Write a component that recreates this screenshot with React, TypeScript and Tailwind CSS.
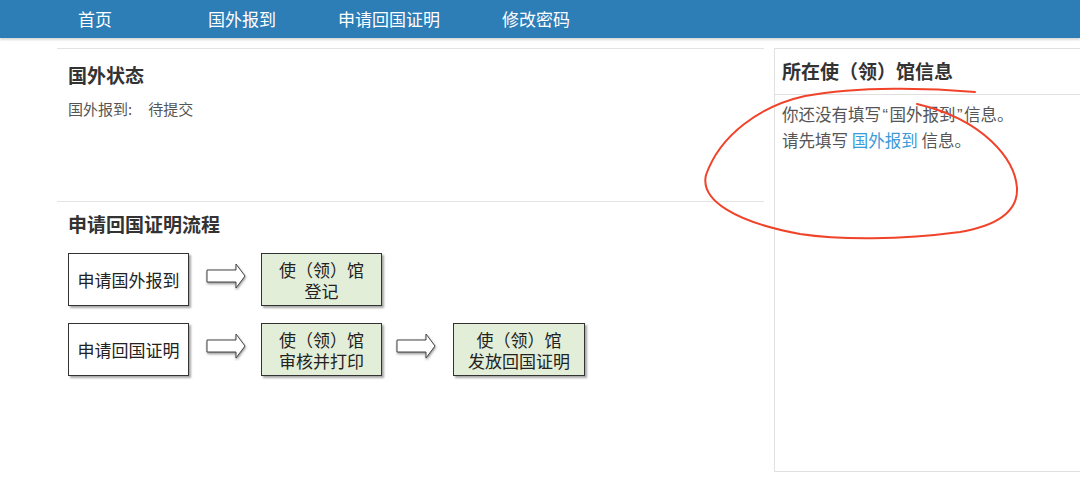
import React from "react";

const font = { fontFamily: '"Noto Sans CJK SC", "Noto Sans", sans-serif' };
const latin = { fontFamily: '"Liberation Sans", sans-serif' };

function Arrow() {
  return (
    <svg width="44" height="30" viewBox="0 0 44 30" className="mt-[8px] shrink-0">
      <defs>
        <filter id="sh" x="-20%" y="-20%" width="150%" height="150%">
          <feDropShadow dx="0.5" dy="1.5" stdDeviation="1" floodColor="#444" floodOpacity="0.6" />
        </filter>
      </defs>
      <path d="M2 9 H31 V3 L40 15 L31 27 V21 H2 Z" fill="#fff" stroke="#444" strokeWidth="1" filter="url(#sh)" />
    </svg>
  );
}

function Box({ children, green }: { children: React.ReactNode; green?: boolean }) {
  return (
    <div
      className={`flex h-[53px] flex-col items-center justify-center border border-[#333] text-[17px] leading-[21px] text-[#222] shadow-[2px_2px_2px_rgba(0,0,0,0.35)] ${
        green ? "bg-[#e2eed8]" : "bg-white"
      }`}
    >
      {children}
    </div>
  );
}

export default function App() {
  return (
    <div className="relative h-[480px] w-[1080px] overflow-hidden bg-white" style={font}>
      <nav className="flex h-[38px] items-center bg-[#2d7db7] text-[17px] text-white shadow-[0_2px_2px_rgba(0,0,0,0.15)]">
        <span className="ml-[78px]">首页</span>
        <span className="ml-[96px]">国外报到</span>
        <span className="ml-[62px]">申请回国证明</span>
        <span className="ml-[62px]">修改密码</span>
      </nav>
      <div className="mt-[10px] flex">
        <div className="ml-[57px] w-[707px] shrink-0">
          <section className="h-[153px] border-t border-[#e3e3e3] pl-[11px]">
            <h2 className="mt-[14px] text-[19px] font-bold leading-[24px] text-[#333]">国外状态</h2>
            <p className="mt-[12px] text-[15px] leading-[20px] text-[#555]">
              国外报到:<span className="ml-[16px]">待提交</span>
            </p>
          </section>
          <section className="border-t border-[#e3e3e3] pl-[11px]">
            <h2 className="mt-[10px] text-[19px] font-bold leading-[24px] text-[#333]">申请回国证明流程</h2>
            <div className="mt-[17px] flex items-start">
              <div className="w-[121px]">
                <Box>申请国外报到</Box>
              </div>
              <div className="ml-[16px] mr-[12px]">
                <Arrow />
              </div>
              <div className="w-[121px]">
                <Box green>
                  <span>使（领）馆</span>
                  <span>登记</span>
                </Box>
              </div>
            </div>
            <div className="mt-[17px] flex items-start">
              <div className="w-[121px]">
                <Box>申请回国证明</Box>
              </div>
              <div className="ml-[16px] mr-[12px]">
                <Arrow />
              </div>
              <div className="w-[121px]">
                <Box green>
                  <span>使（领）馆</span>
                  <span>审核并打印</span>
                </Box>
              </div>
              <div className="ml-[13px] mr-[14px]">
                <Arrow />
              </div>
              <div className="w-[132px]">
                <Box green>
                  <span>使（领）馆</span>
                  <span>发放回国证明</span>
                </Box>
              </div>
            </div>
          </section>
        </div>
        <aside className="ml-[10px] h-[424px] w-[330px] shrink-0 border border-[#e0e0e0]">
          <div className="flex h-[46px] items-center border-b border-[#e0e0e0] pl-[7px] text-[19px] font-bold text-[#333]">
            所在使（领）馆信息
          </div>
          <div className="pl-[7px] pt-[7px] text-[16.5px] leading-[25px] text-[#555]">
            <p>
              你还没有填写<span className="px-[1.5px]" style={latin}>“</span>国外报到<span className="px-[1.5px]" style={latin}>”</span>信息。
            </p>
            <p>
              请先填写 <span className="text-[#3b9ad8]">国外报到</span> 信息。
            </p>
          </div>
        </aside>
      </div>
      <svg className="pointer-events-none absolute left-0 top-0" width="1080" height="480">
        <path
          d="M975 92 C930 88, 860 86, 805 96 C760 106, 720 135, 706 175 C700 200, 735 222, 800 234 C840 240, 900 240, 960 232 C1000 225, 1018 210, 1017 188 C1015 160, 985 120, 917 104"
          fill="none"
          stroke="#f0432a"
          strokeWidth="2"
          strokeLinecap="round"
        />
      </svg>
    </div>
  );
}
